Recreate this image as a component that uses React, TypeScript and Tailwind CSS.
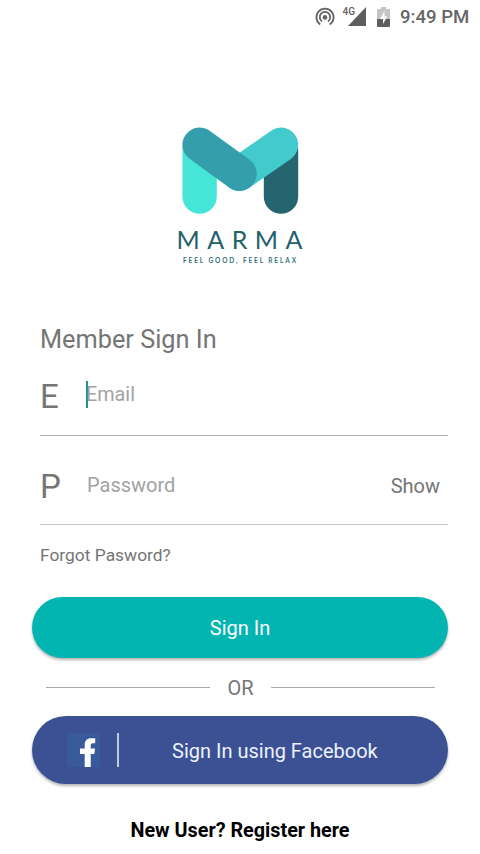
const StatusBar = () => (
  <div className="flex h-[34px] items-center pl-[315px] text-[#666]">
    <svg width="20" height="20" viewBox="0 0 20 20" fill="none" stroke="#666" strokeWidth="1.8">
      <path d="M5.2 17.4 A8.600 8.600 0 1 1 14.8 17.4" />
      <path d="M7 14.4 A5.200 5.200 0 1 1 13 14.4" />
      <circle cx="10" cy="10.400" r="2.3" fill="#666" stroke="none" />
    </svg>
    <svg className="ml-[6px]" width="26" height="24" viewBox="0 0 26 24" fill="#5e5e5e">
      <path d="M25 2 V21 H7 Z" />
      <path d="M0 0 H14.500 V12 H0 Z" fill="#fff" />
      <text x="1.500" y="10.400" fontSize="10" fontWeight="500" fontFamily="Roboto, sans-serif">
        4G
      </text>
    </svg>
    <svg className="ml-[10px]" width="13" height="20" viewBox="0 0 13 20">
      <path d="M4 0 H9 V2 H12 Q13 2 13 3 V12 H0 V3 Q0 2 1 2 H4 Z" fill="#c4c4c4" />
      <path d="M0 12 H13 V19 Q13 20 12 20 H1 Q0 20 0 19 Z" fill="#5e5e5e" />
      <path d="M7.500 4 L3 12 H6 V17 L10.200 9.500 H7.500 Z" fill="#fff" />
    </svg>
    <span className="ml-[10px] text-[18.6px] leading-[34px] font-medium whitespace-nowrap">9:49 PM</span>
  </div>
);

const Logo = () => (
  <svg className="ml-[170px] mt-[86px]" width="140" height="150" viewBox="170 120 140 150" fill="none">
    <g strokeWidth="34.400" strokeLinecap="round">
      <path d="M199.600 150 V196.600" stroke="#45e6d8" />
      <path d="M281 150 V196.600" stroke="#24656f" />
      <path d="M281 144.800 L239.500 173.700" stroke="#42cacd" />
      <path d="M199.600 144.800 L239.500 173.700" stroke="#349eac" />
    </g>
    <text x="176.500" y="248.600" fontSize="25" fill="#22606a" fontFamily="Lato, sans-serif" textLength="126">
      MARMA
    </text>
    <text x="183" y="263" fontSize="6.500" fontWeight="700" fill="#37707a" fontFamily="Lato, sans-serif" textLength="113">
      FEEL GOOD, FEEL RELAX
    </text>
  </svg>
);

const FacebookIcon = () => (
  <svg width="33" height="34" viewBox="0 0 33 34">
    <rect width="33" height="34" rx="1" fill="#385a9b" />
    <path
      d="M17.700 34 V21 H13 V15.500 H17.700 V12 C17.700 7.500 20 5.200 24.200 5.200 H28.200 V10.200 H26 C24.200 10.200 23.700 11 23.700 12.600 V15.500 H28 L27.300 21 H23.700 V34 Z"
      fill="#fff"
    />
  </svg>
);

export default function App() {
  return (
    <div className="h-[854px] w-[480px] overflow-hidden bg-white font-['Roboto',sans-serif] text-[#757575]">
      <StatusBar />
      <Logo />

      <form className="mx-8 mt-[54px]">
        <div className="pl-2">
          <h1 className="text-[25.3px] leading-8">Member Sign In</h1>

          <div className="flex h-20 items-center border-b border-[#b0b0b0]">
            <span className="mt-0.5 w-[46px] text-[33px]">E</span>
            <span className="-mt-0.5 h-[27px] w-[2px] bg-[#1f9389]" />
            <span className="-ml-[2px] -mt-px text-[19.8px] text-[#a2a2a2]">Email</span>
          </div>

          <div className="flex h-[89px] items-center border-b border-[#c4c4c4] pt-3">
            <span className="mt-0.5 w-[47px] text-[33px]">P</span>
            <span className="-mt-0.5 text-[20px] text-[#a2a2a2]">Password</span>
            <span className="ml-auto mr-2 text-[20px]">Show</span>
          </div>

          <a className="mt-[18px] block text-[17.4px] leading-6">Forgot Pasword?</a>
        </div>

        <button
          type="button"
          className="mt-[30px] block h-[61px] w-full rounded-full bg-[#02b5b0] pt-px text-[20px] text-white shadow-[0_2px_3px_rgba(0,0,0,0.3)]"
        >
          Sign In
        </button>

        <div className="flex h-[58px] items-center justify-between pr-[13px] pl-[14px]">
          <span className="h-px w-[164px] bg-[#a8a8a8]" />
          <span className="mt-0.5 text-[20px]">OR</span>
          <span className="h-px w-[164px] bg-[#a8a8a8]" />
        </div>

        <button
          type="button"
          className="flex h-[68px] w-full items-center rounded-full bg-[#3b5193] pl-[35px] text-[20px] text-[#eef2ff] shadow-[0_2px_3px_rgba(0,0,0,0.3)]"
        >
          <FacebookIcon />
          <span className="ml-[17px] h-[34px] w-[2px] bg-[#bcc8e4]" />
          <span className="mt-0.5 ml-[53px]">Sign In using Facebook</span>
        </button>
      </form>

      <p className="mt-[34px] text-center text-[19.8px] leading-[26px] font-bold text-black">
        New User? Register here
      </p>
    </div>
  );
}
